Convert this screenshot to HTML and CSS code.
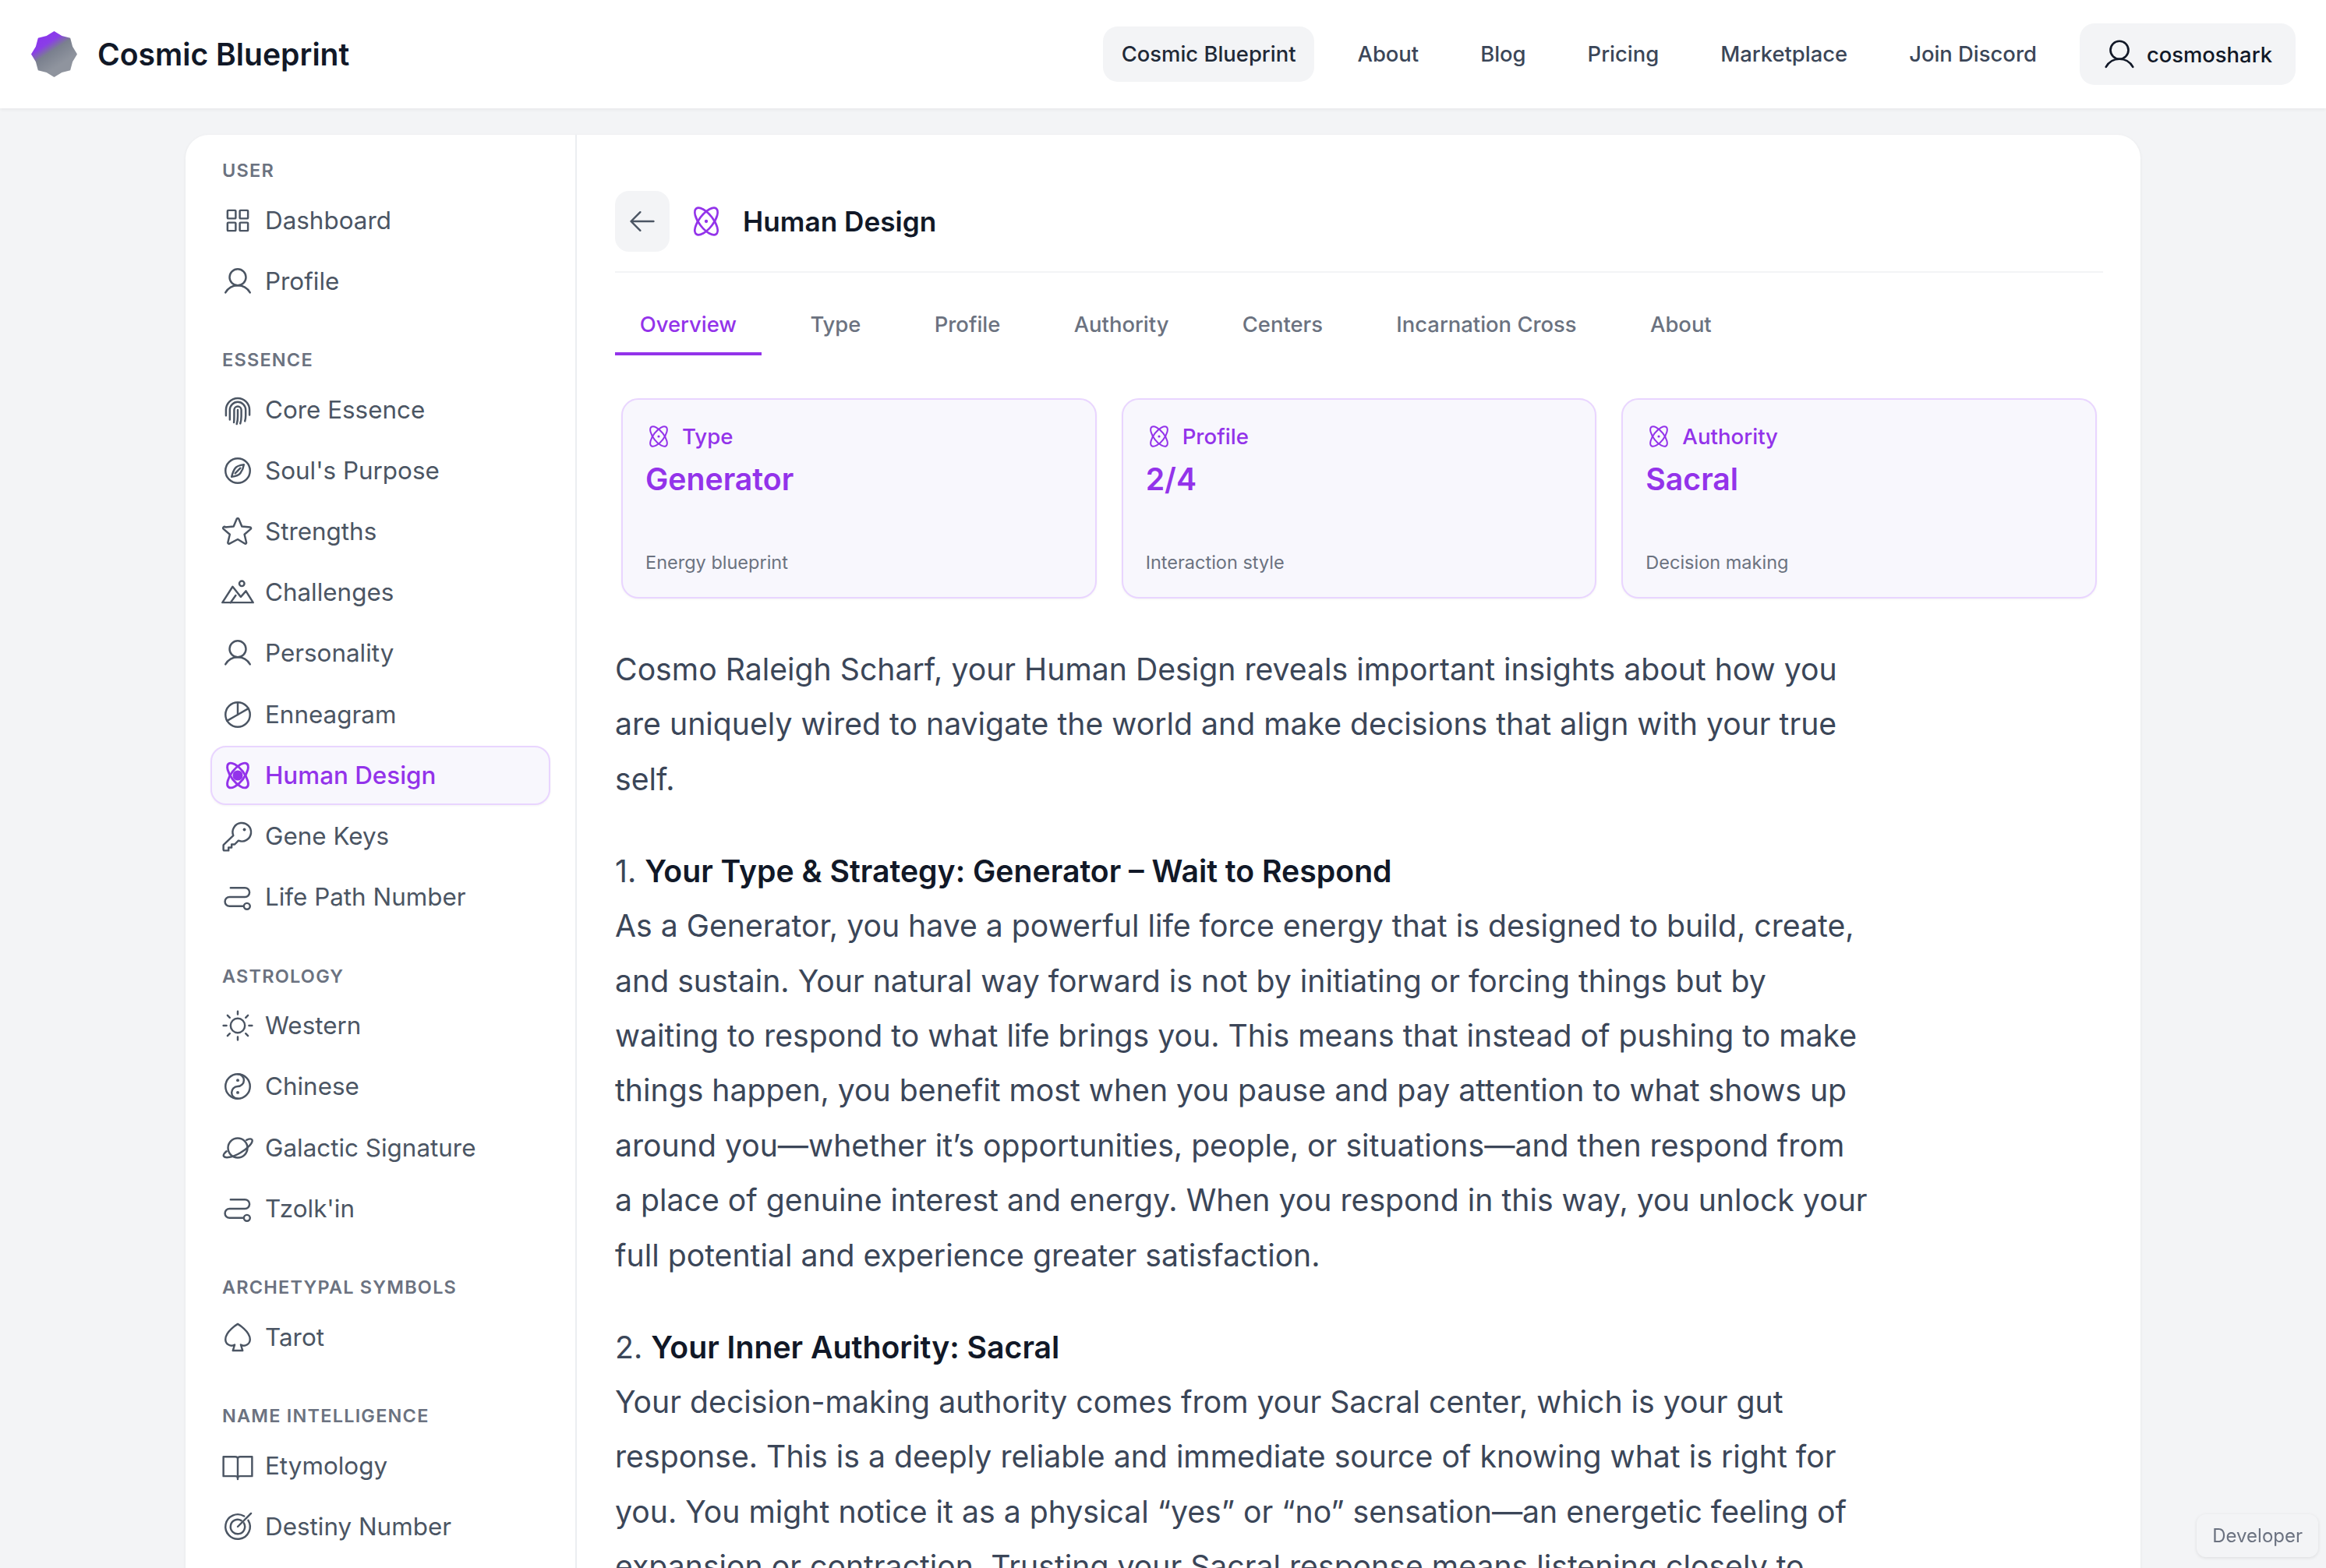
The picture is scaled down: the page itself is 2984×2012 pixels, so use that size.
FILE: index.html
```html
<!DOCTYPE html>
<html lang="en">
<head>
    <meta charset="UTF-8">
    <title>Cosmic Blueprint - Human Design</title>
    <link rel="stylesheet" href="styles.css">
</head>
<body>

    <!-- icon sprite -->
    <svg class="sprite" xmlns="http://www.w3.org/2000/svg">
        <symbol id="i-grid" viewBox="0 0 256 256"><rect x="48" y="48" width="64" height="64" rx="6"/><rect x="144" y="48" width="64" height="64" rx="6"/><rect x="48" y="144" width="64" height="64" rx="6"/><rect x="144" y="144" width="64" height="64" rx="6"/></symbol>
        <symbol id="i-user" viewBox="0 0 256 256"><circle cx="128" cy="96" r="64"/><path d="M32 216c19.4-33.5 54.6-56 96-56s76.6 22.500 96 56"/></symbol>
        <symbol id="i-finger" viewBox="0 0 256 256"><path d="M36 172v-44a92 92 0 0 1 184 0v40"/><path d="M66 204V128a62 62 0 0 1 124 0v44c0 16-2 30-6 44"/><path d="M98 226c2-14 2-28 2-46v-52a28 28 0 0 1 56 0v48c0 20-2 40-8 58"/><path d="M128 128v48c0 22-2 42-8 62"/></symbol>
        <symbol id="i-compass" viewBox="0 0 256 256"><circle cx="128" cy="128" r="96"/><path d="M176 80c-30 4-56 12-68 28s-22 44-28 68c30-4 56-12 68-28s24-40 28-68Z"/><path d="M108 148l40-40"/></symbol>
        <symbol id="i-star" viewBox="0 0 256 256"><path d="M128 189.090l54.720 33.650a8.400 8.400 0 0 0 12.520-9.170l-14.880-62.790 48.700-42a8.460 8.460 0 0 0-4.790-14.830l-63.920-5.180-24.620-59.600a8.360 8.360 0 0 0-15.460 0l-24.620 59.600-63.920 5.180A8.460 8.460 0 0 0 17.250 109l48.700 42-14.880 62.790a8.400 8.400 0 0 0 12.520 9.170Z"/></symbol>
        <symbol id="i-mountain" viewBox="0 0 256 256"><circle cx="160" cy="60" r="20"/><path d="M8 208h240l-56-90-40 46-64-80Z"/><path d="M72 208l40-56"/></symbol>
        <symbol id="i-pie" viewBox="0 0 256 256"><circle cx="128" cy="128" r="96"/><path d="M128 32v96L45 176"/><path d="M128 128l83-48"/></symbol>
        <symbol id="i-atom" viewBox="0 0 256 256"><ellipse cx="128" cy="128" rx="116" ry="50" transform="rotate(52 128 128)"/><ellipse cx="128" cy="128" rx="116" ry="50" transform="rotate(-52 128 128)"/><circle class="dot" cx="128" cy="128" r="12"/></symbol>
        <symbol id="i-atom-fill" viewBox="0 0 256 256"><ellipse cx="128" cy="128" rx="116" ry="50" transform="rotate(52 128 128)"/><ellipse cx="128" cy="128" rx="116" ry="50" transform="rotate(-52 128 128)"/><circle class="dot" cx="128" cy="128" r="40"/></symbol>
        <symbol id="i-key" viewBox="0 0 256 256"><path d="M93.200 122.800a72 72 0 1 1 40 40L104 192H80v24H56v24H24a8 8 0 0 1-8-8V200a8 8 0 0 1 2.300-5.700Z"/><circle class="dot" cx="180" cy="76" r="12"/></symbol>
        <symbol id="i-path" viewBox="0 0 256 256"><circle cx="200" cy="200" r="24"/><path d="M176 200H64a36 36 0 0 1 0-72h120a36 36 0 0 0 0-72H72"/></symbol>
        <symbol id="i-sun" viewBox="0 0 256 256"><circle cx="128" cy="128" r="56"/><path d="M128 40V16M65.800 65.800 48 48M40 128H16M65.800 190.200 48 208M128 216v24M190.200 190.200 208 208M216 128h24M190.200 65.800 208 48"/></symbol>
        <symbol id="i-yin" viewBox="0 0 256 256"><circle cx="128" cy="128" r="96"/><path d="M128 32a48 48 0 0 1 0 96 48 48 0 0 0 0 96"/><circle class="dot" cx="128" cy="80" r="12"/><circle class="dot" cx="128" cy="176" r="12"/></symbol>
        <symbol id="i-planet" viewBox="0 0 256 256"><circle cx="128" cy="128" r="76"/><path d="M196 66c24-10 40-10 44-2 10 20-30 66-92 102S30 212 18 192c-4-8 4-22 22-38"/></symbol>
        <symbol id="i-spade" viewBox="0 0 256 256"><path d="M128 24S32 80 32 144a48 48 0 0 0 72 42l-14 46h76l-14-46a48 48 0 0 0 72-42C224 80 128 24 128 24Z"/></symbol>
        <symbol id="i-book" viewBox="0 0 256 256"><path d="M128 72c0-10-8-16-20-16H16v152h92c12 0 20 6 20 16 0-10 8-16 20-16h92V56h-92c-12 0-20 6-20 16v160"/></symbol>
        <symbol id="i-target" viewBox="0 0 256 256"><path d="M128 128L232 24"/><path d="M210 78a96 96 0 1 1-32-32"/><path d="M176 100a56 56 0 1 1-20-20"/></symbol>
        <symbol id="i-arrow" viewBox="0 0 256 256"><path d="M216 128H40M112 56l-72 72 72 72"/></symbol>
        <linearGradient id="logo-fill" x1="0.1" y1="0" x2="0.6" y2="0.75"><stop offset="0" stop-color="#8b2ff0"/><stop offset="0.4" stop-color="#8a3ee8"/><stop offset="0.62" stop-color="#7a808e"/><stop offset="1" stop-color="#8f949e"/></linearGradient>
    </svg>

    <header class="topbar">
        <div class="brand">
            <svg class="brand-logo" viewBox="0 0 60 60"><path fill="url(#logo-fill)" d="M30 0 40 6 51 9 54 20 60 30 54 40 51 51 40 54 30 60 20 54 9 51 6 40 0 30 6 20 9 9 20 6Z"/></svg>
            <span class="brand-name">Cosmic Blueprint</span>
        </div>
        <nav class="topnav">
            <a class="topnav-item active">Cosmic Blueprint</a>
            <a class="topnav-item">About</a>
            <a class="topnav-item">Blog</a>
            <a class="topnav-item">Pricing</a>
            <a class="topnav-item">Marketplace</a>
            <a class="topnav-item">Join Discord</a>
            <a class="user-btn"><svg class="icon user-icon"><use href="#i-user"/></svg>cosmoshark</a>
        </nav>
    </header>

    <div class="panel">
        <aside class="sidebar">
            <section class="side-group">
                <h4 class="side-label">USER</h4>
                <a class="side-item"><svg class="icon"><use href="#i-grid"/></svg>Dashboard</a>
                <a class="side-item"><svg class="icon"><use href="#i-user"/></svg>Profile</a>
            </section>
            <section class="side-group">
                <h4 class="side-label">ESSENCE</h4>
                <a class="side-item"><svg class="icon"><use href="#i-finger"/></svg>Core Essence</a>
                <a class="side-item"><svg class="icon"><use href="#i-compass"/></svg>Soul's Purpose</a>
                <a class="side-item"><svg class="icon"><use href="#i-star"/></svg>Strengths</a>
                <a class="side-item"><svg class="icon"><use href="#i-mountain"/></svg>Challenges</a>
                <a class="side-item"><svg class="icon"><use href="#i-user"/></svg>Personality</a>
                <a class="side-item"><svg class="icon"><use href="#i-pie"/></svg>Enneagram</a>
                <a class="side-item active"><svg class="icon"><use href="#i-atom-fill"/></svg>Human Design</a>
                <a class="side-item"><svg class="icon"><use href="#i-key"/></svg>Gene Keys</a>
                <a class="side-item"><svg class="icon"><use href="#i-path"/></svg>Life Path Number</a>
            </section>
            <section class="side-group">
                <h4 class="side-label">ASTROLOGY</h4>
                <a class="side-item"><svg class="icon"><use href="#i-sun"/></svg>Western</a>
                <a class="side-item"><svg class="icon"><use href="#i-yin"/></svg>Chinese</a>
                <a class="side-item"><svg class="icon"><use href="#i-planet"/></svg>Galactic Signature</a>
                <a class="side-item"><svg class="icon"><use href="#i-path"/></svg>Tzolk'in</a>
            </section>
            <section class="side-group">
                <h4 class="side-label">ARCHETYPAL SYMBOLS</h4>
                <a class="side-item"><svg class="icon"><use href="#i-spade"/></svg>Tarot</a>
            </section>
            <section class="side-group">
                <h4 class="side-label">NAME INTELLIGENCE</h4>
                <a class="side-item"><svg class="icon"><use href="#i-book"/></svg>Etymology</a>
                <a class="side-item"><svg class="icon"><use href="#i-target"/></svg>Destiny Number</a>
            </section>
        </aside>

        <main class="content">
            <div class="page-head">
                <button class="back-btn"><svg class="icon"><use href="#i-arrow"/></svg></button>
                <svg class="icon title-icon"><use href="#i-atom"/></svg>
                <h1 class="page-title">Human Design</h1>
            </div>

            <div class="tabs">
                <a class="tab active">Overview</a>
                <a class="tab">Type</a>
                <a class="tab">Profile</a>
                <a class="tab">Authority</a>
                <a class="tab">Centers</a>
                <a class="tab">Incarnation Cross</a>
                <a class="tab">About</a>
            </div>

            <div class="stat-grid">
                <div class="stat-card">
                    <div class="stat-label"><svg class="icon"><use href="#i-atom"/></svg>Type</div>
                    <div class="stat-value">Generator</div>
                    <div class="stat-note">Energy blueprint</div>
                </div>
                <div class="stat-card">
                    <div class="stat-label"><svg class="icon"><use href="#i-atom"/></svg>Profile</div>
                    <div class="stat-value">2/4</div>
                    <div class="stat-note">Interaction style</div>
                </div>
                <div class="stat-card">
                    <div class="stat-label"><svg class="icon"><use href="#i-atom"/></svg>Authority</div>
                    <div class="stat-value">Sacral</div>
                    <div class="stat-note">Decision making</div>
                </div>
            </div>

            <article class="prose">
                <p>Cosmo Raleigh Scharf, your Human Design reveals important insights about how you are uniquely wired to navigate the world and make decisions that align with your true self.</p>
                <p>1. <strong>Your Type &amp; Strategy: Generator – Wait to Respond</strong><br>
                As a Generator, you have a powerful life force energy that is designed to build, create, and sustain. Your natural way forward is not by initiating or forcing things but by waiting to respond to what life brings you. This means that instead of pushing to make things happen, you benefit most when you pause and pay attention to what shows up around you—whether it’s opportunities, people, or situations—and then respond from a place of genuine interest and energy. When you respond in this way, you unlock your full potential and experience greater satisfaction.</p>
                <p>2. <strong>Your Inner Authority: Sacral</strong><br>
                Your decision-making authority comes from your Sacral center, which is your gut response. This is a deeply reliable and immediate source of knowing what is right for you. You might notice it as a physical “yes” or “no” sensation—an energetic feeling of expansion or contraction. Trusting your Sacral response means listening closely to</p>
            </article>
        </main>
    </div>

    <div class="dev-badge">Developer</div>

</body>
</html>
```
FILE: styles.css
```css
:root {
    --page-bg: #f3f4f6;
    --line: #e5e7eb;
    --ink: #111827;
    --body: #3b4658;
    --side: #4b5563;
    --muted: #6b7280;
    --purple: #9333ea;
    --purple-line: #e9d5ff;
    --purple-bg: #f8f7fd;
}

html, body {
    height: 100%;
    overflow: hidden;
}

body {
    margin: 0;
    background-color: var(--page-bg);
    color: var(--body);
    font-family: Inter, "Liberation Sans", sans-serif;
}

.sprite { position: absolute; width: 0; height: 0; }

.icon {
    display: block;
    flex-shrink: 0;
    width: 42px;
    height: 42px;
    fill: none;
    stroke: currentColor;
    stroke-width: 15;
    stroke-linecap: round;
    stroke-linejoin: round;
}
.dot { fill: currentColor; stroke: none; }

/* top bar */
.topbar {
    display: flex;
    align-items: center;
    justify-content: space-between;
    height: 139px;
    box-sizing: border-box;
    padding: 0 39px 0 40px;
    background-color: #fff;
    box-shadow: 0 2px 4px rgba(0,0,0,0.05);
}
.brand { display: flex; align-items: center; gap: 26px; }
.brand-logo { display: block; width: 59px; height: 59px; }
.brand-name { font-size: 39.1px; font-weight: 600; color: #111827; }

.topnav { display: flex; align-items: center; gap: 31px; font-size: 27.4px; font-weight: 500; color: var(--body); }
.topnav-item { padding: 0 24px; height: 71px; line-height: 71px; border-radius: 19px; }
.topnav-item.active { background-color: var(--page-bg); color: #1f2937; }
.user-btn {
    display: flex;
    align-items: center;
    gap: 12px;
    height: 79px;
    padding: 0 30px 0 28px;
    border-radius: 19px;
    background-color: var(--page-bg);
    color: var(--ink);
}
.user-icon { width: 46px; height: 46px; }

/* main panel */
.panel {
    display: flex;
    width: 2508px;
    margin: 34px auto 0;
    background-color: #fff;
    border-radius: 30px;
    box-shadow: 0 1px 4px rgba(0,0,0,0.06);
    overflow: hidden;
}

.sidebar {
    flex: 0 0 502px;
    box-sizing: border-box;
    padding: 31px 32px 40px;
    border-right: 2px solid #eceef1;
}
.side-group { margin-bottom: 48.5px; }
.side-label {
    margin: 0 0 10.5px;
    padding-left: 15px;
    font-size: 23.5px;
    line-height: 30px;
    font-weight: 600;
    letter-spacing: 1.2px;
    color: var(--muted);
}
.side-item {
    display: flex;
    align-items: center;
    gap: 14px;
    height: 76px;
    box-sizing: border-box;
    margin-bottom: 2.2px;
    padding-left: 12px;
    border: 2px solid transparent;
    border-radius: 20px;
    font-size: 31.4px;
    color: var(--side);
}
.side-item.active {
    color: var(--purple);
    font-weight: 500;
    background-color: var(--purple-bg);
    border-color: var(--purple-line);
    box-shadow: 0 1px 3px rgba(0,0,0,0.05);
}
.side-item.active .icon { stroke-width: 18; }

/* content */
.content { flex: 1; padding: 72px 48px 0 49px; min-width: 0; }

.page-head {
    display: flex;
    align-items: center;
    padding-bottom: 25px;
    border-bottom: 2px solid #f3f4f6;
}
.back-btn {
    display: flex;
    align-items: center;
    justify-content: center;
    width: 70px;
    height: 78px;
    padding: 0;
    border: 0;
    border-radius: 18px;
    background-color: var(--page-bg);
    color: var(--side);
}
.title-icon { width: 46px; height: 46px; margin-left: 24px; color: var(--purple); }
.page-title { margin: 0 0 0 24px; font-size: 35.2px; font-weight: 600; color: var(--ink); }

.tabs { display: flex; gap: 31px; margin-top: 28px; font-size: 27.4px; font-weight: 500; color: var(--muted); }
.tab { padding: 0 31.7px; height: 78px; line-height: 76px; box-sizing: border-box; }
.tab.active { color: var(--purple); border-bottom: 4px solid var(--purple); }

.stat-grid {
    display: grid;
    grid-template-columns: repeat(3, 1fr);
    gap: 32px;
    margin-top: 55px;
    padding: 0 8px;
}
.stat-card {
    display: flex;
    flex-direction: column;
    height: 257px;
    box-sizing: border-box;
    padding: 30px 29px;
    border: 2px solid var(--purple-line);
    border-radius: 22px;
    background-color: var(--purple-bg);
    box-shadow: 0 1px 3px rgba(0,0,0,0.05);
}
.stat-label { display: flex; align-items: center; gap: 13px; font-size: 27.6px; font-weight: 500; color: var(--purple); }
.stat-label .icon { width: 34px; height: 34px; }
.stat-value { margin-top: 14px; font-size: 39.2px; font-weight: 600; color: var(--purple); }
.stat-note { margin-top: auto; font-size: 23.5px; color: var(--muted); }

.prose { max-width: 1608px; margin-top: 56px; font-size: 39.2px; line-height: 70.4px; color: var(--body); }
.prose p { margin: 0 0 47.6px; }
.prose strong { font-weight: 600; color: var(--ink); }

.dev-badge {
    position: fixed;
    right: 10px;
    bottom: 14px;
    padding: 0 20px;
    height: 55px;
    line-height: 55px;
    border-radius: 12px;
    font-size: 24px;
    color: var(--muted);
    background-color: var(--page-bg);
    box-shadow: 0 1px 4px rgba(0,0,0,0.1);
}
```
